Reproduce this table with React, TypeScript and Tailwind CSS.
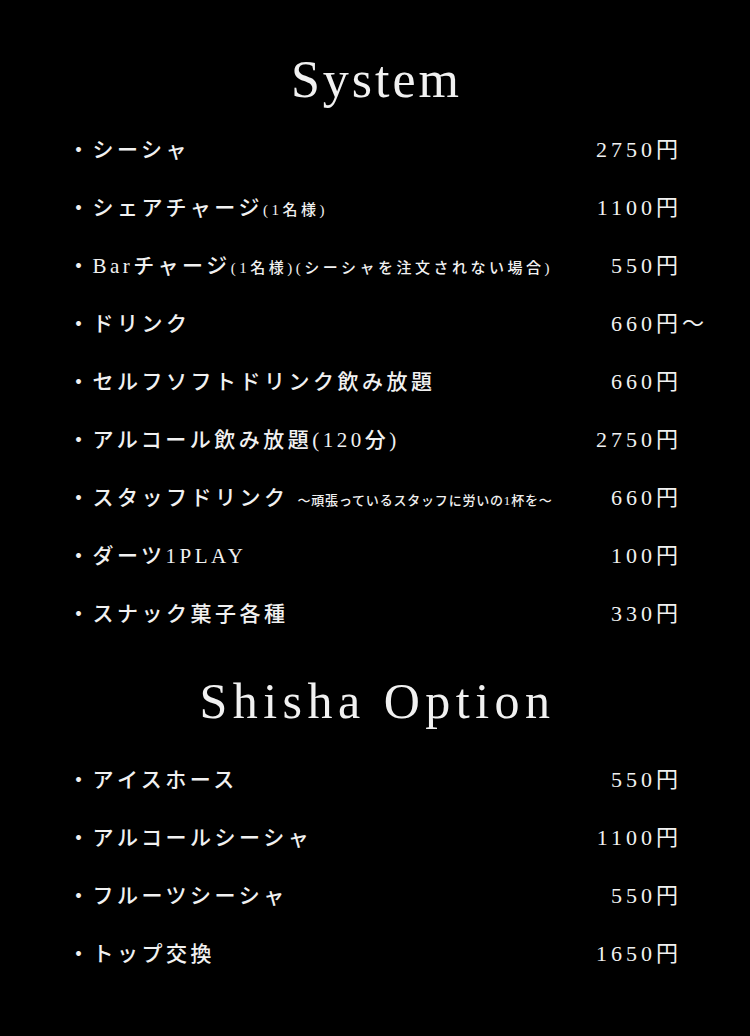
import React from "react"

interface MenuItem {
  name: string
  note?: string
  small?: boolean
  price: string
  suffix?: string
}

const systemItems: MenuItem[] = [
  { name: "シーシャ", price: "2750円" },
  { name: "シェアチャージ", note: "(1名様)", price: "1100円" },
  { name: "Barチャージ", note: "(1名様)(シーシャを注文されない場合)", price: "550円" },
  { name: "ドリンク", price: "660円", suffix: "〜" },
  { name: "セルフソフトドリンク飲み放題", price: "660円" },
  { name: "アルコール飲み放題(120分)", price: "2750円" },
  { name: "スタッフドリンク", note: "〜頑張っているスタッフに労いの1杯を〜", small: true, price: "660円" },
  { name: "ダーツ1PLAY", price: "100円" },
  { name: "スナック菓子各種", price: "330円" },
]

const optionItems: MenuItem[] = [
  { name: "アイスホース", price: "550円" },
  { name: "アルコールシーシャ", price: "1100円" },
  { name: "フルーツシーシャ", price: "550円" },
  { name: "トップ交換", price: "1650円" },
]

const font = "font-['Liberation_Serif','Noto_Sans_CJK_JP',serif]"

const Row: React.FC<{ item: MenuItem }> = ({ item }) => {
  return (
    <div className="flex h-[58px] items-center justify-between">
      <div className="flex items-baseline whitespace-nowrap font-medium">
        <span className="text-[21px] leading-none tracking-[3.5px]">・{item.name}</span>
        {item.note && !item.small && (
          <span className="text-[15px] leading-none tracking-[3.5px]">{item.note}</span>
        )}
        {item.note && item.small && (
          <span className="ml-[9px] text-[13px] leading-none tracking-[0.8px]">{item.note}</span>
        )}
      </div>
      <div className="flex items-baseline whitespace-nowrap text-[22px] leading-none tracking-[4px]">
        <span>{item.price}</span>
        {item.suffix && <span className="-mr-[26px]">{item.suffix}</span>}
      </div>
    </div>
  )
}

export default function App() {
  return (
    <div className={`min-h-[1036px] w-[750px] bg-black text-[#f1f1f1] ${font}`}>
      <div className="flex flex-col pl-[68px] pr-[68px] pt-[54px]">
        <h1 className="mb-[15px] pl-[3px] text-center text-[52px] leading-none tracking-[3px]">System</h1>
        {systemItems.map((item) => (
          <Row key={item.name} item={item} />
        ))}
        <h2 className="mb-[25px] mt-[33px] pl-[5px] text-center text-[50px] leading-none tracking-[5.5px]">
          Shisha Option
        </h2>
        {optionItems.map((item) => (
          <Row key={item.name} item={item} />
        ))}
      </div>
    </div>
  )
}
